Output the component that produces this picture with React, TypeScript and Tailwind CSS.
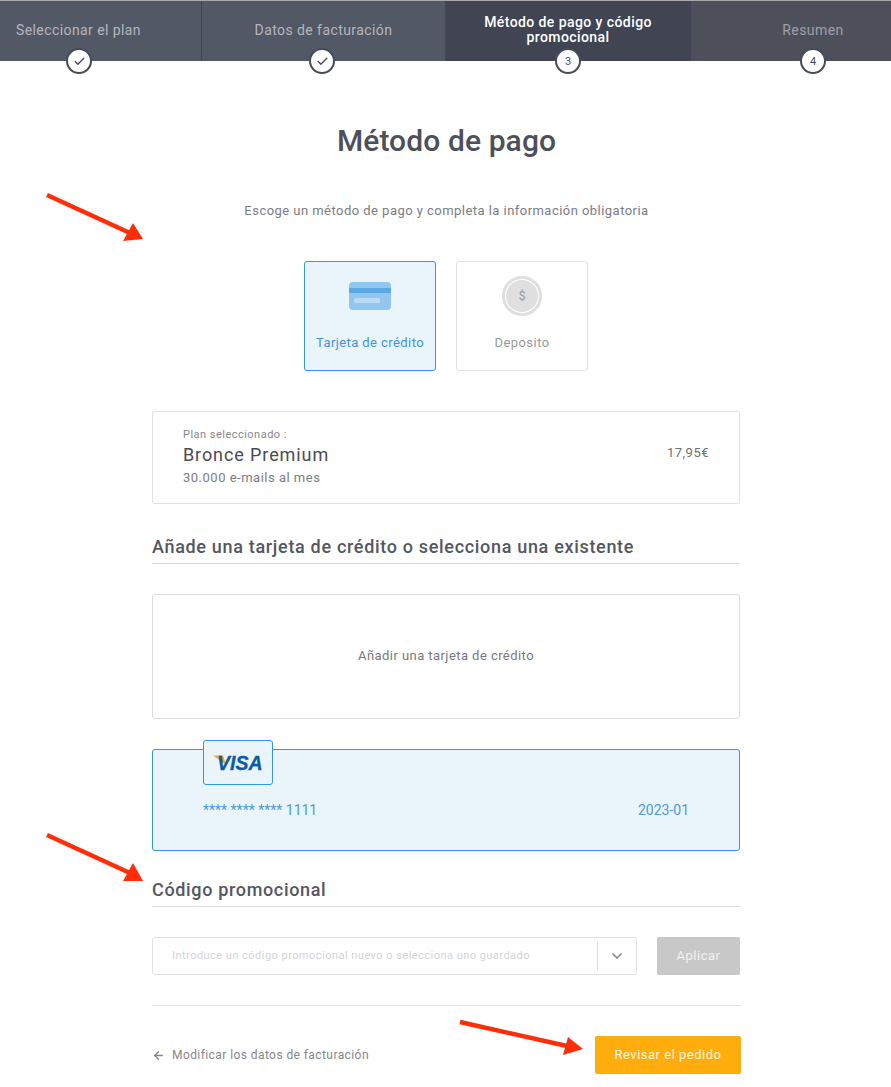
import { Check, ChevronDown, ArrowLeft } from 'lucide-react';

const steps = [
  { label: 'Seleccionar el plan', width: 'w-[202px]', bg: 'bg-[#535866]', text: 'text-[#b4b6bd] pr-[44px]', border: 'border-r border-[#41444f]', mark: 'check', markPos: 'left-[66px]' },
  { label: 'Datos de facturación', width: 'w-[243px]', bg: 'bg-[#535866]', text: 'text-[#b4b6bd]', border: '', mark: 'check', markPos: 'left-[107px]' },
  { label: 'Método de pago y código promocional', width: 'w-[246px]', bg: 'bg-[#414453]', text: 'text-white font-medium px-[30px]', border: '', mark: '3', markPos: 'left-[110px]' },
  { label: 'Resumen', width: 'w-[200px]', bg: 'bg-[#4d4f5b]', text: 'text-[#9fa0a8] pl-[44px]', border: '', mark: '4', markPos: 'left-[109px]' },
];

function RedArrow({ className, width, height, line, head }: { className: string; width: number; height: number; line: string; head: string }) {
  return (
    <svg className={className} width={width} height={height} viewBox={`0 0 ${width} ${height}`}>
      <path d={line} stroke="#ff2d08" strokeWidth="4.5" fill="none" />
      <polygon points={head} fill="#ff2d08" />
    </svg>
  );
}

export default function App() {
  return (
    <div className="relative w-[891px] h-[1087px] overflow-hidden bg-white font-['Roboto',sans-serif] text-[#484b55]">

      {/* steps */}
      <div className="flex h-[61px] border-t border-[#a9a9a9]">
        {steps.map(s => (
          <div key={s.label} className={`relative flex items-center justify-center pb-[2px] text-center text-[14px] leading-[15px] tracking-[0.42px] ${s.width} ${s.bg} ${s.text} ${s.border}`}>
            <span>{s.label}</span>
            <div className={`absolute top-[47px] flex h-[26px] w-[26px] items-center justify-center rounded-full border-2 border-[#484b58] bg-white text-[11px] font-normal tracking-normal text-[#484b58] ${s.markPos}`}>
              {s.mark === 'check' ? <Check size={13} strokeWidth={2.5} /> : s.mark}
            </div>
          </div>
        ))}
      </div>

      <main className="ml-[152px] flex w-[589px] flex-col">
        <h1 className="mt-[62px] text-center text-[30px] leading-[36px] font-medium tracking-[0.1px] text-[#4d4f59]">Método de pago</h1>
        <p className="mt-[42px] text-center text-[13px] leading-[20px] tracking-[0.46px] text-[#7b7c82]">Escoge un método de pago y completa la información obligatoria</p>

        {/* payment methods */}
        <div className="mt-[40px] flex justify-center gap-[20px] pr-[1px]">
          <div className="flex h-[110px] w-[132px] flex-col items-center rounded-[3px] border border-[#3498db] bg-[#e9f4fb] pt-[20px]">
            <svg width="42" height="28" viewBox="0 0 42 28">
              <rect width="42" height="28" rx="4" fill="#92c6ee" />
              <rect y="6" width="42" height="5" fill="#5aa9e2" />
              <rect x="5" y="16" width="26" height="5" rx="1" fill="#b9daf4" />
            </svg>
            <span className="mt-[25px] text-[13px] leading-[16px] tracking-[0.42px] text-[#3f95d6]">Tarjeta de crédito</span>
          </div>
          <div className="flex h-[110px] w-[132px] flex-col items-center rounded-[3px] border border-[#e2e2e2] pt-[14px]">
            <div className="flex h-[40px] w-[40px] items-center justify-center rounded-full border-[3px] border-[#dfdfdf] bg-white">
              <div className="flex h-[32px] w-[32px] items-center justify-center rounded-full bg-[#dfdfdf] text-[12px] text-[#999999]">$</div>
            </div>
            <span className="mt-[19px] text-[13px] leading-[16px] tracking-[0.45px] text-[#999999]">Deposito</span>
          </div>
        </div>

        {/* plan */}
        <div className="mt-[40px] mr-[1px] flex h-[93px] justify-between rounded-[2px] border border-[#e2e2e2] px-[30px]">
          <div className="pt-[16px]">
            <div className="text-[11px] leading-[14px] tracking-[0.48px] text-[#86878c]">Plan seleccionado :</div>
            <div className="mt-[2px] text-[18px] leading-[22px] tracking-[0.9px] text-[#484b55]">Bronce Premium</div>
            <div className="mt-[3px] text-[13px] leading-[18px] tracking-[0.5px] text-[#7b7c82]">30.000 e-mails al mes</div>
          </div>
          <div className="pt-[32px] text-[13px] leading-[18px] tracking-[0.5px] text-[#6f7076]">17,95€</div>
        </div>

        <h2 className="mt-[31px] mr-[1px] border-b border-[#dcdcdc] pb-[4px] text-[18px] leading-[24px] font-medium tracking-[0.68px] text-[#55575f]">Añade una tarjeta de crédito o selecciona una existente</h2>

        {/* add card */}
        <div className="mt-[30px] mr-[1px] flex h-[125px] items-center justify-center rounded-[3px] border border-[#dcdcdc] pb-[2px] text-[13px] tracking-[0.44px] text-[#77787e]">Añadir una tarjeta de crédito</div>

        {/* saved card */}
        <div className="relative mt-[30px] mr-[1px] flex h-[102px] items-start justify-between rounded-[3px] border border-[#3498db] bg-[#e9f4fb] px-[50px] pt-[51px] text-[14px] leading-[18px] text-[#4b9bd8]">
          <div className="absolute top-[-10px] left-[50px] flex h-[45px] w-[70px] items-center justify-center rounded-[3px] border border-[#3498db] bg-[#e9f4fb]">
            <svg width="52" height="20" viewBox="0 0 52 20">
              <path d="M1 2.5h10l3 9z" fill="#f3a81d" />
              <text x="5" y="16.5" fontFamily="'Liberation Sans', sans-serif" fontSize="19.5" fontWeight="700" fontStyle="italic" fill="#0b5aa8" stroke="#0b5aa8" strokeWidth="0.3">VISA</text>
            </svg>
          </div>
          <span>**** **** **** 1111</span>
          <span>2023-01</span>
        </div>

        <h2 className="mt-[27px] mr-[1px] border-b border-[#dcdcdc] pb-[4px] text-[18px] leading-[24px] font-medium tracking-[0.66px] text-[#55575f]">Código promocional</h2>

        {/* promo */}
        <div className="mt-[30px] mr-[1px] flex gap-[20px]">
          <div className="flex h-[38px] w-[485px] items-center rounded-[3px] border border-[#e2e2e2] pl-[19px]">
            <span className="flex-1 text-[11px] tracking-[0.47px] text-[#d3d3d6]">Introduce un código promocional nuevo o selecciona uno guardado</span>
            <div className="flex h-[28px] w-[39px] items-center justify-center border-l border-[#dcdcdc] text-[#85868b]">
              <ChevronDown size={16} strokeWidth={2.5} />
            </div>
          </div>
          <div className="flex h-[38px] w-[83px] items-center justify-center rounded-[2px] bg-[#c8c8c8] text-[13px] tracking-[0.5px] text-[#f1f1f1]">Aplicar</div>
        </div>

        <div className="mt-[30px] border-t border-[#e2e2e6]" />

        {/* footer */}
        <div className="mt-[30px] flex items-center justify-between">
          <div className="flex items-center gap-[7px] text-[12px] tracking-[0.42px] text-[#85868b]">
            <ArrowLeft size={13} strokeWidth={2.5} />
            <span>Modificar los datos de facturación</span>
          </div>
          <div className="flex h-[38px] w-[146px] items-center justify-center rounded-[2px] bg-[#ffad0d] text-[13px] tracking-[0.5px] text-[#fff6e4]">Revisar el pedido</div>
        </div>
      </main>

      {/* annotation arrows */}
      <RedArrow className="absolute top-[192px] left-[46px]" width={100} height={52} line="M1 3 L84 41" head="97,47 77,49 87,31" />
      <RedArrow className="absolute top-[832px] left-[46px]" width={100} height={52} line="M1 3 L84 41" head="97,49 77,49 87,31" />
      <RedArrow className="absolute top-[1017px] left-[459px]" width={126} height={42} line="M1 5 L108 29" head="124,32 104,38 109,20" />
    </div>
  );
}
